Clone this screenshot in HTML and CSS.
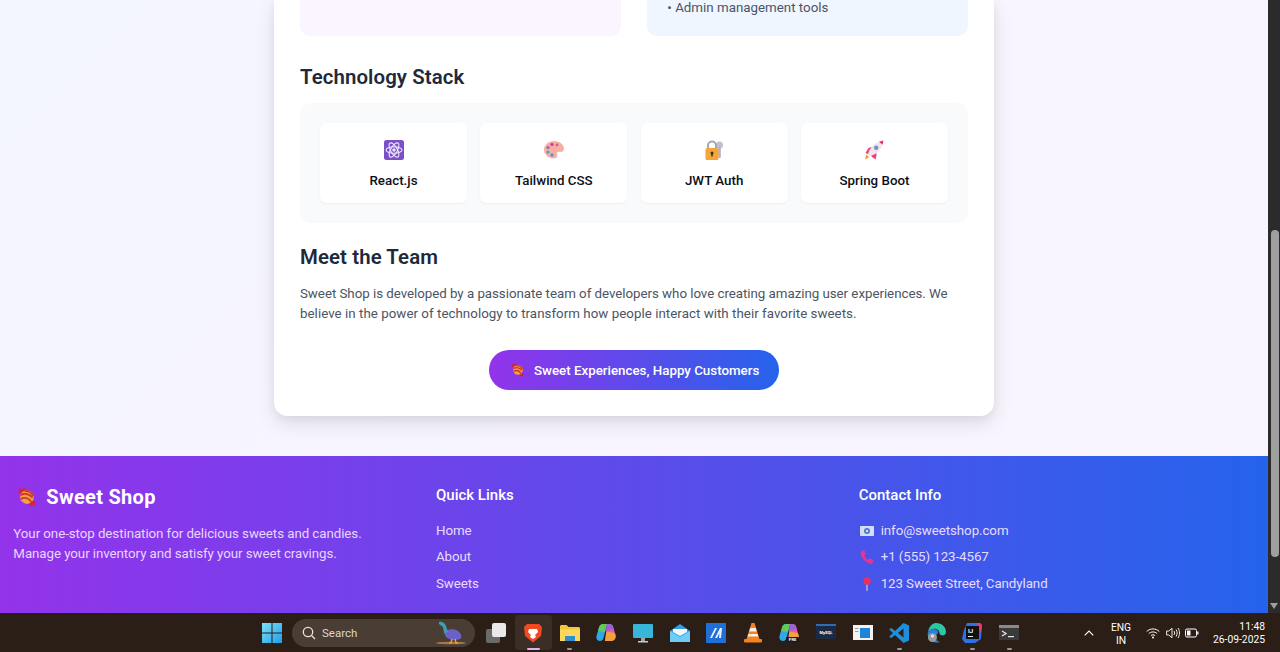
FILE: index.html
```html
<!DOCTYPE html>
<html lang="en">
<head>
  <meta charset="UTF-8" />
  <meta name="viewport" content="width=device-width, initial-scale=1.0"/>
  <title>About - Sweet Shop</title>
  <link rel="stylesheet" href="styles.css">
</head>
<body>
  <svg class="sprite" aria-hidden="true">
    <defs>
      <linearGradient id="win" x1="0" y1="0" x2="1" y2="1">
        <stop offset="0" stop-color="#7fe0f8"/>
        <stop offset="1" stop-color="#1e9ee8"/>
      </linearGradient>
    </defs>
    <symbol id="candy" viewBox="0 0 32 32">
      <path d="M10 10 2 9l2-4-2-4 6 2 4-2 2 6z" fill="#d5223f"/>
      <path d="M22 22l8 1-2 4 2 4-6-2-4 2-2-6z" fill="#d5223f"/>
      <circle cx="16" cy="16" r="11" fill="#f4a142"/>
      <path d="M6 13c6-4 14-2 19 4M6 19c6-3 13-2 17 5M12 6c5 0 11 2 14 8" fill="none" stroke="#cf3a2a" stroke-width="3"/>
    </symbol>
    <symbol id="copilot" viewBox="0 0 20 20">
      <path d="M7 1h4L7.500 15c-.4 1.600-1.500 3-3.500 3-2.500 0-4.200-2.400-3.500-5L3 4.500C3.500 2.500 5 1 7 1z" fill="#2fa8e8"/>
      <path d="M7 1h4L9 9 2.200 8 3 4.500C3.500 2.500 5 1 7 1z" fill="#62c85a"/>
      <path d="M11 1h2.500c1.800 0 3 1 3.500 2.500L19.500 12c.7 2.800-1 6-4 6H9z" fill="#e45bb0"/>
      <path d="M10.500 8.500l8.300 1.500.7 2c.7 2.800-1 6-4 6H9z" fill="#f3a23c"/>
      <path d="M11 1h2.500c1.800 0 3 1 3.500 2.500l.8 2.500-7.800 2z" fill="#9a62d8"/>
    </symbol>
  </svg>

  <div class="screen">
    <div class="viewport">
      <div class="page">
        <main class="main">
          <div class="card">
            <div class="feature-row">
              <div class="feature feature-purple"></div>
              <div class="feature feature-blue">
                <div class="feature-item">• Admin management tools</div>
              </div>
            </div>

            <h2 class="section-title">Technology Stack</h2>
            <div class="tech-panel">
              <div class="tech-card">
                <div class="tech-icon">
                  <svg class="icon-20" viewBox="0 0 20 20">
                    <rect width="20" height="20" rx="2.500" fill="#7b4fc6"/>
                    <g fill="none" stroke="#efe6ff" stroke-width="1.100">
                      <ellipse cx="10" cy="10" rx="8" ry="3.300"/>
                      <ellipse cx="10" cy="10" rx="8" ry="3.300" transform="rotate(60 10 10)"/>
                      <ellipse cx="10" cy="10" rx="8" ry="3.300" transform="rotate(120 10 10)"/>
                    </g>
                    <circle cx="10" cy="10" r="1.700" fill="#efe6ff"/>
                  </svg>
                </div>
                <div class="tech-name">React.js</div>
              </div>
              <div class="tech-card">
                <div class="tech-icon">
                  <svg class="icon-20" viewBox="0 0 20 20">
                    <path d="M10 1c5.500 0 10 3.600 10 7.800 0 3-2.500 3.400-4.500 3-2-.4-3 .8-2.300 2.500.8 2-.4 4.200-3.200 4.200C4.500 18.500 0 14.600 0 9.800 0 5 4.500 1 10 1z" fill="#f6b0a2"/>
                    <circle cx="8" cy="4.500" r="1.700" fill="#d9408f"/>
                    <circle cx="13" cy="5" r="1.400" fill="#e0559b"/>
                    <circle cx="4" cy="7.500" r="1.600" fill="#a05fc0"/>
                    <circle cx="4" cy="12" r="1.600" fill="#3fa6c8"/>
                    <circle cx="8" cy="15" r="1.700" fill="#5b8fd0"/>
                  </svg>
                </div>
                <div class="tech-name">Tailwind CSS</div>
              </div>
              <div class="tech-card">
                <div class="tech-icon">
                  <svg class="icon-20" viewBox="0 0 20 20">
                    <circle cx="15.500" cy="5" r="3.500" fill="#c3bfd0"/>
                    <rect x="14.200" y="7" width="2.600" height="11" rx="1" fill="#b5b0c4"/>
                    <path d="M4 9V5.500a4 4 0 0 1 8 0V9" fill="none" stroke="#a9a4b2" stroke-width="2"/>
                    <rect x="1.500" y="8" width="13" height="12" rx="1.500" fill="#f5a63a"/>
                    <circle cx="8" cy="13" r="1.500" fill="#3a2a20"/>
                    <rect x="7.300" y="13" width="1.400" height="3.500" fill="#3a2a20"/>
                  </svg>
                </div>
                <div class="tech-name">JWT Auth</div>
              </div>
              <div class="tech-card">
                <div class="tech-icon">
                  <svg class="icon-20" viewBox="0 0 20 20">
                    <path d="M1 19.500l1.200-5 3 2.800z" fill="#f59a3c"/>
                    <path d="M4.500 8 9 6.500l-4 8L1.500 13zM12.500 15.500 11.500 19.500 7 16l5-6z" fill="#ea3f78"/>
                    <path d="M4 14C5.500 8.500 9.500 3.500 15.500 1.500l3 3C16.500 10.500 12 14.500 6 16z" fill="#f1e4ee"/>
                    <path d="M15 1.700 19.500.5l-1 4.300z" fill="#e8305f"/>
                    <circle cx="12.200" cy="7.800" r="2.200" fill="#6f92c8"/>
                  </svg>
                </div>
                <div class="tech-name">Spring Boot</div>
              </div>
            </div>

            <h2 class="section-title">Meet the Team</h2>
            <p class="team-text">
              <span class="team-line">Sweet Shop is developed by a passionate team of developers who love creating amazing user experiences. We</span>
              <span class="team-line team-line-last">believe in the power of technology to transform how people interact with their favorite sweets.</span>
            </p>

            <div class="tagline-wrap">
              <div class="tagline">
                <svg class="icon-14"><use href="#candy"/></svg>
                <span class="tagline-text">Sweet Experiences, Happy Customers</span>
              </div>
            </div>
          </div>
        </main>

        <footer class="footer">
          <div class="footer-col">
            <div class="footer-logo">
              <svg class="icon-20"><use href="#candy"/></svg>
              <span>Sweet Shop</span>
            </div>
            <p class="footer-text">Your one-stop destination for delicious sweets and candies.<br>Manage your inventory and satisfy your sweet cravings.</p>
          </div>
          <div class="footer-col">
            <h3 class="footer-title">Quick Links</h3>
            <ul class="footer-list">
              <li>Home</li>
              <li>About</li>
              <li>Sweets</li>
            </ul>
          </div>
          <div class="footer-col">
            <h3 class="footer-title">Contact Info</h3>
            <ul class="footer-list">
              <li class="contact">
                <svg class="icon-contact" viewBox="0 0 14 14">
                  <rect y="2" width="14" height="10" rx=".8" fill="#d5dcf5"/>
                  <circle cx="7" cy="7" r="3" fill="#4a78c8"/>
                  <circle cx="7" cy="7" r="1.300" fill="#d5dcf5"/>
                </svg>
                info@sweetshop.com
              </li>
              <li class="contact">
                <svg class="icon-contact" viewBox="0 0 14 14">
                  <path d="M1 1.500 3.500.500c.6-.1 1 .1 1.200.6l.9 2.500c.1.500 0 .9-.4 1.200l-1 .8c.8 1.800 2.200 3.300 4 4.200l1-.9c.4-.3.800-.4 1.300-.2l2.300 1.100c.5.200.7.700.5 1.200l-1 2.300c-.2.400-.6.700-1.100.6C5.500 13 1 8 .500 2.500c0-.4.100-.8.500-1z" fill="#e5368f"/>
                </svg>
                +1 (555) 123-4567
              </li>
              <li class="contact">
                <svg class="icon-contact" viewBox="0 0 14 14">
                  <rect x="6.400" y="6" width="1.200" height="8" fill="#c9c6d6"/>
                  <circle cx="7" cy="4" r="3.800" fill="#e8305f"/>
                </svg>
                123 Sweet Street, Candyland
              </li>
            </ul>
          </div>
        </footer>
      </div>

      <div class="scrollbar">
        <div class="scroll-thumb"></div>
        <div class="scroll-arrow"></div>
      </div>
    </div>

    <div class="taskbar">
      <svg class="start" viewBox="0 0 20 20">
        <path d="M0 0h9.500v9.500H0zM10.500 0H20v9.500h-9.500zM0 10.500h9.500V20H0zM10.500 10.500H20V20h-9.500z" fill="url(#win)"/>
      </svg>

      <div class="search">
        <svg class="search-icon" viewBox="0 0 14 14">
          <circle cx="6" cy="6" r="4.700" fill="none" stroke="#e8e4e0" stroke-width="1.300"/>
          <path d="M9.500 9.500 13 13" stroke="#e8e4e0" stroke-width="1.300"/>
        </svg>
        <span class="search-label">Search</span>
        <svg class="search-bird" viewBox="0 0 32 24">
          <ellipse cx="16" cy="22" rx="15" ry="1.300" fill="#a9764a"/>
          <path d="M9 12c2-4 9-5 14-2 4 3 4 7 2 8-4 2-11 1-14-2z" fill="#6b62c8"/>
          <path d="M4 1c3-1 6 1 7 4l2 6-4 1-1-6-4-3z" fill="#3f9fb0"/>
          <path d="M17 18l-1 4h-2M20 18l1 4h2" stroke="#e8a23c" stroke-width="1.500" fill="none"/>
        </svg>
      </div>

      <div class="taskview">
        <svg class="app-icon" viewBox="0 0 20 20">
          <rect x="0" y="6" width="14" height="14" rx="2" fill="#6c6a68"/>
          <rect x="6" y="0" width="14" height="14" rx="2" fill="#e9e9e9"/>
        </svg>
      </div>

      <div class="apps">
        <div class="app app-active">
          <svg class="app-icon" viewBox="0 0 20 20">
            <path d="M4 1h12l3 3-1 9-8 6.500L2 13 1 4z" fill="#f04a22"/>
            <path d="M6 6h8l1 3-3 3 1 2-3 2-3-2 1-2-3-3z" fill="#fff"/>
          </svg>
          <i class="dot dot-active"></i>
        </div>
        <div class="app">
          <svg class="app-icon" viewBox="0 0 20 20">
            <path d="M0 3.500c0-.8.600-1.500 1.500-1.500h5l2 2h10c.8 0 1.500.7 1.500 1.500V18H0z" fill="#f5c63c"/>
            <rect x="0" y="6.500" width="20" height="11.500" fill="#fbd75b"/>
            <rect x="5" y="13" width="10" height="5" fill="#2f8fd0"/>
          </svg>
          <i class="dot"></i>
        </div>
        <div class="app">
          <svg class="app-icon"><use href="#copilot"/></svg>
        </div>
        <div class="app">
          <svg class="app-icon" viewBox="0 0 20 20">
            <rect y="1" width="20" height="14" rx="1" fill="#38b6d8"/>
            <rect x="8" y="15" width="4" height="3" fill="#9aa5ab"/>
            <rect x="5" y="18" width="10" height="1.500" fill="#c5ccd0"/>
          </svg>
        </div>
        <div class="app">
          <svg class="app-icon" viewBox="0 0 20 20">
            <path d="M0 8 10 1l10 7v11H0z" fill="#2f9fe0"/>
            <path d="M0 8l10 6 10-6v11H0z" fill="#6fcdf5"/>
            <path d="M3 6h14v3l-7 4-7-4z" fill="#f0f6fb"/>
          </svg>
        </div>
        <div class="app">
          <svg class="app-icon" viewBox="0 0 20 20">
            <rect width="20" height="20" fill="#1e6fd8"/>
            <path d="M4 15 9 5h2l-5 10zM9 15l5-10h2l-1 10h-2l.5-5-2.500 5z" fill="#e8f2ff"/>
          </svg>
        </div>
        <div class="app">
          <svg class="app-icon" viewBox="0 0 20 20">
            <path d="M8.500 0h3l5 16h-13z" fill="#f58220"/>
            <path d="M7.300 5h5.400l1 3.500H6.200zM5.500 11h9l.8 2.500H4.700z" fill="#f4f0ea"/>
            <rect x="1" y="16" width="18" height="3.500" rx="1" fill="#f58220"/>
          </svg>
        </div>
        <div class="app">
          <svg class="app-icon" viewBox="0 0 20 20">
            <use href="#copilot"/>
            <rect x="7" y="14" width="13" height="5.500" rx="1" fill="#1c1c1c"/>
            <text class="app-tag" x="13.500" y="18.300">PRE</text>
          </svg>
        </div>
        <div class="app">
          <svg class="app-icon" viewBox="0 0 20 20">
            <rect y="1" width="20" height="15" rx="1" fill="#1c2b45"/>
            <rect y="1" width="20" height="2" fill="#2f6db0"/>
            <text class="app-tag" x="10" y="11">MySQL</text>
          </svg>
        </div>
        <div class="app">
          <svg class="app-icon" viewBox="0 0 20 20">
            <rect y="2" width="20" height="15" fill="#f2f2f0"/>
            <rect x="7" y="5" width="10" height="10" fill="#1e86d8"/>
            <rect x="2" y="5" width="3.500" height="1" fill="#9aa0a6"/>
            <rect x="2" y="8" width="3.500" height="1" fill="#9aa0a6"/>
          </svg>
        </div>
        <div class="app">
          <svg class="app-icon" viewBox="0 0 20 20">
            <path d="M14.500 0 20 2.500v15L14.500 20 6 12l-3.500 3L0 13.700 4 10 0 6.300 2.500 5 6 8z" fill="#1f8fdc"/>
            <path d="M14.500 5.500v9L9 10z" fill="#2b2018"/>
          </svg>
          <i class="dot"></i>
        </div>
        <div class="app">
          <svg class="app-icon" viewBox="0 0 20 20">
            <path d="M10 0c6 0 10 4 10 9 0 3-3 4-5 3-2-.5-1-3-3-5-3-2.500-8-1-10 2C3 4 6 0 10 0z" fill="#2fc6a8"/>
            <path d="M2 9c2-3 6-4 9-2 2 2 1 4-1 5-3 2 0 6 4 7-6 2-14-2-12-10z" fill="#2a7fd8"/>
            <circle cx="6.500" cy="14.500" r="4.500" fill="#9a9a9a"/>
            <circle cx="6.500" cy="13" r="1.500" fill="#e8e8e8"/>
          </svg>
        </div>
        <div class="app">
          <svg class="app-icon" viewBox="0 0 20 20">
            <path d="M5 0h13l2 2-1 14-6 4H3l-3-4 2-9z" fill="#2f6fe8"/>
            <path d="M14 0h4l2 2-1 8z" fill="#e8386f"/>
            <rect x="4" y="3" width="13" height="13" fill="#111"/>
            <text class="app-tag app-tag-ij" x="8.500" y="9.500">IJ</text>
            <rect x="6" y="13" width="5" height="1" fill="#eee"/>
          </svg>
          <i class="dot"></i>
        </div>
        <div class="app">
          <svg class="app-icon" viewBox="0 0 20 20">
            <rect y="2" width="20" height="15" rx="1" fill="#3a3a3a"/>
            <rect y="2" width="20" height="3" fill="#8a8a88"/>
            <path d="M3 8l4 2.500L3 13" fill="none" stroke="#e8e8e8" stroke-width="1.300"/>
            <rect x="9" y="13" width="6" height="1.200" fill="#e8e8e8"/>
          </svg>
          <i class="dot"></i>
        </div>
      </div>

      <div class="tray">
        <svg class="tray-chevron" viewBox="0 0 10 6">
          <path d="M.700 5.300 5 1l4.300 4.300" fill="none" stroke="#fff" stroke-width="1.100"/>
        </svg>
        <div class="tray-lang">ENG<br>IN</div>
        <svg class="tray-icon tray-wifi" viewBox="0 0 14 12">
          <g fill="none" stroke="#fff" stroke-width="1">
            <path d="M.700 4.500c3.500-3.400 9-3.400 12.600 0M2.800 6.600c2.300-2.200 6-2.200 8.400 0M4.900 8.600c1.200-1 3-1 4.200 0"/>
          </g>
          <circle cx="7" cy="10.500" r="1" fill="#fff"/>
        </svg>
        <svg class="tray-icon tray-sound" viewBox="0 0 14 12">
          <path d="M.600 4h2.200L6 1.200v9.600L2.800 8H.600z" fill="none" stroke="#fff" stroke-width=".9"/>
          <path d="M8 4c.8 1.200.8 2.800 0 4M10 2.500c1.500 2 1.500 5 0 7M12 1c2 3 2 7 0 10" fill="none" stroke="#fff" stroke-width=".9"/>
        </svg>
        <svg class="tray-icon tray-battery" viewBox="0 0 14 10">
          <rect x=".5" y="1" width="11" height="8" rx="1.500" fill="none" stroke="#fff"/>
          <rect x="2" y="2.500" width="3.500" height="5" fill="#fff"/>
          <rect x="12.200" y="3.500" width="1.300" height="3" fill="#fff"/>
        </svg>
        <div class="tray-clock">11:48<br>26-09-2025</div>
      </div>
    </div>
  </div>
</body>
</html>
```

FILE: styles.css
```css
* {
  box-sizing: border-box;
}

body {
  margin: 0;
  height: 652px;
  overflow: hidden;
  font-family: Roboto, "Noto Sans", sans-serif;
  font-size: 13.33px;
  line-height: 20px;
}

.sprite {
  position: absolute;
  width: 0;
  height: 0;
}

.icon-14 {
  width: 14px;
  height: 14px;
}

.icon-20 {
  width: 20px;
  height: 20px;
}

.screen {
  display: flex;
  flex-direction: column;
  height: 652px;
}

.viewport {
  display: flex;
  height: 613px;
}

/* page is scrolled down, so it is pinned to the bottom */
.page {
  flex: 1;
  min-width: 0;
  display: flex;
  flex-direction: column;
  justify-content: flex-end;
  overflow: hidden;
  background: linear-gradient(135deg, #f3f5ff, #f9f5ff 60%, #f8f5ff);
}

.main {
  display: flex;
  justify-content: center;
  padding-bottom: 40px;
}

.card {
  width: 720px;
  padding: 0 26px 26.67px;
  background: #fff;
  border-radius: 0 0 13.33px 13.33px;
  box-shadow: 0 8px 20px rgba(0, 0, 0, 0.1), 0 3px 8px rgba(0, 0, 0, 0.05);
}

.feature-row {
  display: grid;
  grid-template-columns: 1fr 1fr;
  gap: 26.67px;
  margin-bottom: 26.7px;
}

.feature {
  height: 37px;
  padding: 1.5px 20px 0;
  border-radius: 0 0 10px 10px;
}

.feature-purple {
  background: #faf5ff;
}

.feature-blue {
  background: #eff6ff;
}

.feature-item {
  line-height: 14px;
  color: #4b5563;
}

.section-title {
  margin: 0 0 12.33px;
  padding-top: 1px;
  font-size: 20.4px;
  line-height: 26.67px;
  letter-spacing: 0.1px;
  font-weight: 600;
  color: #1e293b;
}

.tech-panel {
  display: grid;
  grid-template-columns: repeat(4, 1fr);
  gap: 13.33px;
  padding: 20px;
  margin-bottom: 20px;
  background: #f9fafb;
  border-radius: 10px;
}

.tech-card {
  display: flex;
  flex-direction: column;
  align-items: center;
  padding: 13.33px 13.33px 12.33px;
  background: #fff;
  border-radius: 6.67px;
  box-shadow: 0 1px 2px rgba(0, 0, 0, 0.05);
}

.tech-icon {
  display: flex;
  align-items: center;
  height: 26.67px;
  margin-bottom: 7.67px;
}

.tech-name {
  font-weight: 500;
  color: #0b0f19;
}

.team-text {
  margin: 0 0 25.67px;
  padding-top: 1px;
  color: #4b5563;
  white-space: nowrap;
}

.team-line {
  display: block;
  letter-spacing: -0.04px;
}

.team-line-last {
  letter-spacing: 0.03px;
}

.tagline-wrap {
  display: flex;
  justify-content: center;
}

.tagline {
  display: flex;
  align-items: center;
  gap: 9px;
  width: 290px;
  height: 40px;
  padding-left: 22px;
  color: #fff;
  font-weight: 500;
  background: linear-gradient(to right, #9333ea, #2563eb);
  border-radius: 20px;
  white-space: nowrap;
}

.tagline-text {
  padding-top: 2px;
}

.footer {
  display: grid;
  grid-template-columns: repeat(3, 1fr);
  gap: 26.67px;
  padding: 26.67px 13.33px 19px;
  color: #fff;
  background: linear-gradient(to right, #9333ea, #2563eb);
}

.footer-logo {
  display: flex;
  align-items: center;
  gap: 9px;
  height: 28px;
  padding-left: 4px;
  margin-bottom: 13px;
  font-size: 20px;
  letter-spacing: 0.3px;
  font-weight: 700;
}

.footer-text {
  margin: 0;
  color: #e9d5ff;
  letter-spacing: -0.07px;
  white-space: nowrap;
}

.footer-title {
  margin: 0 0 13.33px;
  padding-top: 1px;
  font-size: 15px;
  line-height: 23.33px;
  font-weight: 500;
}

.footer-list {
  display: flex;
  flex-direction: column;
  gap: 6.67px;
  margin: 0;
  padding: 0;
  list-style: none;
  color: #e7dcff;
  letter-spacing: -0.08px;
}

.contact {
  display: flex;
  align-items: center;
  gap: 7px;
}

.icon-contact {
  width: 14px;
  height: 14px;
  margin-left: 1px;
}

.scrollbar {
  position: relative;
  width: 12px;
  background: #2b2b2b;
}

.scroll-thumb {
  position: absolute;
  top: 230px;
  left: 3px;
  width: 8px;
  height: 327px;
  background: #9f9f9f;
  border-radius: 4px;
}

.scroll-arrow {
  position: absolute;
  bottom: 4px;
  left: 2px;
  border-style: solid;
  border-width: 6px 4px 0;
  border-color: #9f9f9f transparent transparent;
}

.taskbar {
  display: flex;
  align-items: center;
  height: 39px;
  padding-left: 262px;
  color: #fff;
  background: #2a1e16;
}

.start {
  width: 20px;
  height: 20px;
  flex: none;
}

.search {
  display: flex;
  align-items: center;
  width: 183px;
  height: 28px;
  margin-left: 10px;
  padding-left: 10px;
  background: #4a3d33;
  border-radius: 14px;
}

.search-icon {
  width: 14px;
  height: 14px;
}

.search-label {
  margin-left: 6px;
  font-size: 11.5px;
  color: #ddd6d0;
}

.search-bird {
  width: 32px;
  height: 24px;
  margin-left: auto;
  margin-right: 8px;
}

.taskview {
  display: flex;
  margin-left: 11px;
}

.app-icon {
  width: 20px;
  height: 20px;
}

.apps {
  display: flex;
  margin-left: 9px;
}

.app {
  position: relative;
  display: flex;
  align-items: center;
  justify-content: center;
  width: 36.6px;
  height: 35px;
  border-radius: 4px;
}

.app-active {
  background: #3a2e26;
}

.dot {
  position: absolute;
  bottom: 0;
  left: 15.8px;
  width: 5px;
  height: 2.5px;
  background: #9c9690;
  border-radius: 2px;
}

.dot-active {
  left: 11.8px;
  width: 13px;
  background: #e0b0e8;
}

.app-tag {
  font-size: 4px;
  font-weight: 700;
  fill: #fff;
  text-anchor: middle;
}

.app-tag-ij {
  font-size: 6px;
}

.tray {
  display: flex;
  align-items: center;
  margin-left: auto;
  font-size: 10.3px;
  line-height: 13px;
}

.tray-chevron {
  width: 10px;
  height: 6px;
}

.tray-lang {
  width: 30px;
  padding-top: 2px;
  margin-left: 12px;
  text-align: center;
}

.tray-icon {
  height: 12px;
}

.tray-wifi {
  width: 14px;
  margin-left: 10px;
}

.tray-sound {
  width: 14px;
  margin-left: 6px;
}

.tray-battery {
  width: 14px;
  margin-left: 5px;
}

.tray-clock {
  margin-left: 14px;
  padding-right: 15px;
  text-align: right;
}
```
